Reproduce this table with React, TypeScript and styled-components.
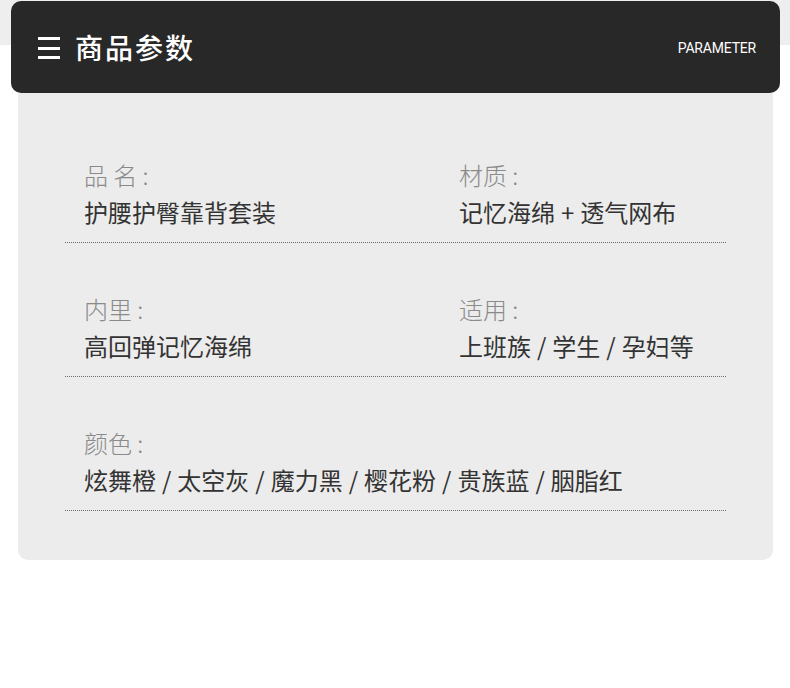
import React from 'react';
import styled, { createGlobalStyle } from 'styled-components';

const GlobalStyle = createGlobalStyle`
  body {
    margin: 0;
    background: #ffffff;
    font-family: "Noto Sans CJK SC", "Noto Sans", sans-serif;
  }
`;

type Spec = { label: string; value: string };

const rows: Spec[][] = [
  [
    { label: '品 名 :', value: '护腰护臀靠背套装' },
    { label: '材质 :', value: '记忆海绵 + 透气网布' }
  ],
  [
    { label: '内里 :', value: '高回弹记忆海绵' },
    { label: '适用 :', value: '上班族 / 学生 / 孕妇等' }
  ],
  [{ label: '颜色 :', value: '炫舞橙 / 太空灰 / 魔力黑 / 樱花粉 / 贵族蓝 / 胭脂红' }]
];

export default function App() {
  return (
    <Page>
      <GlobalStyle />
      <Header>
        <TitleGroup>
          <MenuIcon width="22" height="22" viewBox="0 0 22 22">
            <rect x="0" y="0" width="22" height="3" fill="#fff" />
            <rect x="0" y="10" width="22" height="3" fill="#fff" />
            <rect x="0" y="19" width="22" height="3" fill="#fff" />
          </MenuIcon>
          <Title>商品参数</Title>
        </TitleGroup>
        <Subtitle>PARAMETER</Subtitle>
      </Header>
      <Card>
        {rows.map((row, i) => (
          <Row key={i}>
            {row.map(item => (
              <Cell key={item.label} $wide={row.length === 1}>
                <Label>{item.label}</Label>
                <Value>{item.value}</Value>
              </Cell>
            ))}
          </Row>
        ))}
      </Card>
    </Page>
  );
}

const Page = styled.div`
  padding-top: 1px;
  min-height: 688px;
  background: linear-gradient(#eeeeee 0, #eeeeee 45px, #ffffff 45px);
`;

const Header = styled.header`
  height: 92px;
  margin: 0 10px 0 11px;
  padding: 0 24px 0 27px;
  background: #282828;
  border-radius: 10px;
  display: flex;
  align-items: center;
  justify-content: space-between;
  position: relative;
  z-index: 1;
`;

const TitleGroup = styled.div`
  display: flex;
  align-items: center;
  gap: 15px;
`;

const MenuIcon = styled.svg`
  display: block;
  margin-top: 2px;
`;

const Title = styled.h1`
  margin: 0;
  color: #ffffff;
  font-size: 28px;
  font-weight: 500;
  letter-spacing: 2px;
  line-height: 1;
`;

const Subtitle = styled.span`
  color: #ffffff;
  font-family: Roboto, "Noto Sans", sans-serif;
  font-size: 14px;
  letter-spacing: -0.2px;
  margin-top: 1px;
`;

const Card = styled.section`
  margin: 0 17px 0 18px;
  padding: 16px 47px 49px;
  background: #ececec;
  border-radius: 0 0 10px 10px;
`;

const Row = styled.div`
  display: grid;
  grid-template-columns: 375px 1fr;
  padding: 51px 0 15px;
  border-bottom: 1px dotted #6e6e6e;
`;

const Cell = styled.div<{ $wide?: boolean }>`
  padding-left: 19px;
  grid-column: ${p => (p.$wide ? '1 / -1' : 'auto')};
  display: flex;
  flex-direction: column;
  gap: 7px;
`;

const Label = styled.div`
  color: #8a8a8a;
  font-size: 24px;
  font-weight: 300;
  line-height: 30px;
`;

const Value = styled.div`
  color: #333333;
  font-size: 24px;
  font-weight: 400;
  line-height: 30px;
  word-spacing: 0.6px;
  white-space: nowrap;
`;
